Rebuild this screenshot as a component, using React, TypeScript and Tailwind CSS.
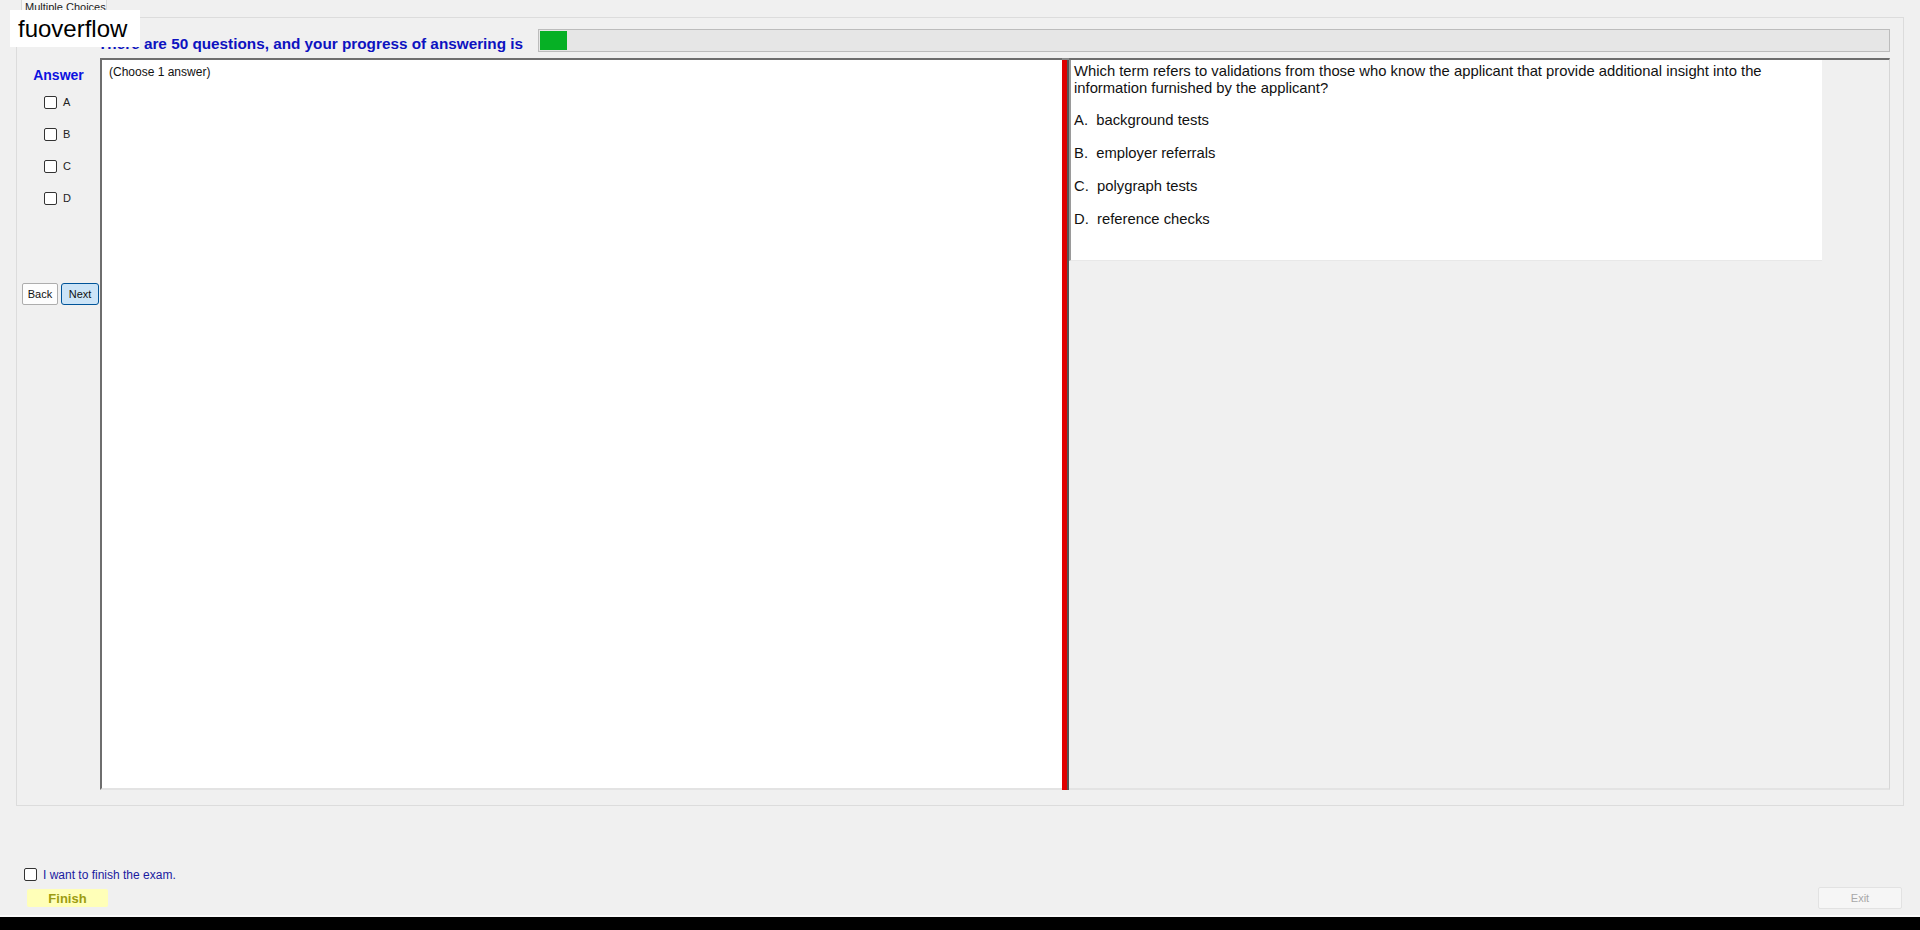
import { useState } from 'react';

const OPTIONS = [
  { key: 'A', text: 'background tests' },
  { key: 'B', text: 'employer referrals' },
  { key: 'C', text: 'polygraph tests' },
  { key: 'D', text: 'reference checks' },
];

const TOTAL = 50;

// Small WinForms-looking checkbox square
const Box = ({ checked, onClick }: { checked: boolean; onClick: () => void }) => (
  <span
    onClick={onClick}
    className="w-[13px] h-[13px] shrink-0 rounded-[2px] border border-[#333333] bg-white flex items-center justify-center cursor-default"
  >
    {checked && (
      <svg width="9" height="9" viewBox="0 0 9 9">
        <path d="M1 4.5 L3.5 7 L8 1.5" stroke="#222" strokeWidth="1.4" fill="none" />
      </svg>
    )}
  </span>
);

const App = () => {
  const [picked, setPicked] = useState<string[]>([]);
  const [finish, setFinish] = useState(false);
  const answered = 1;

  const toggle = (k: string) =>
    setPicked((prev) => (prev.includes(k) ? prev.filter((p) => p !== k) : [k]));

  return (
    <div className="w-full h-[930px] bg-[#f0f0f0] flex flex-col relative overflow-hidden font-['Liberation_Sans',Arial,sans-serif] text-black">
      {/* tab strip */}
      <div className="h-[17px] flex items-end pl-[21px] shrink-0">
        <div className="w-[86px] h-[19px] -mb-[1px] border border-b-0 border-[#d9d9d9] bg-[#f7f7f7] text-[11px] leading-[11px] text-[#222] pl-[3px] pt-[2px] whitespace-nowrap overflow-hidden">
          Multiple Choices
        </div>
      </div>

      {/* tab page */}
      <div className="mx-[16px] h-[789px] shrink-0 border border-[#dcdcdc] flex flex-col pt-[11px] pb-[15px]">
        {/* progress heading */}
        <div className="h-[23px] flex items-center pl-[81px] pr-[13px] shrink-0">
          <span className="text-[15.3px] font-bold text-[#0d12c0] whitespace-nowrap leading-none mt-[7px]">
            There are {TOTAL} questions, and your progress of answering is
          </span>
          <div className="ml-[15px] flex-1 h-[23px] border border-[#bcbcbc] bg-[#e6e6e6] p-[1px]">
            <div className="h-full bg-[#06b025]" style={{ width: `${Math.max(answered / TOTAL * 100, 2)}%` }} />
          </div>
        </div>

        {/* main row */}
        <div className="flex-1 flex mt-[6px] pr-[13px] min-h-0">
          {/* answer sidebar */}
          <div className="w-[83px] shrink-0 flex flex-col">
            <div className="text-[14px] font-bold text-[#0d12e0] text-center pt-[9px] leading-[16px]">Answer</div>
            <div className="flex flex-col gap-[19px] pl-[27px] mt-[13px]">
              {OPTIONS.map((o) => (
                <div key={o.key} className="flex items-center gap-[6px] h-[13px]">
                  <Box checked={picked.includes(o.key)} onClick={() => toggle(o.key)} />
                  <span className="text-[11px] text-[#222]">{o.key}</span>
                </div>
              ))}
            </div>
            <div className="flex gap-[3px] pl-[5px] mt-[78px]">
              <button className="w-[36px] h-[22px] text-[11px] bg-[#fdfdfd] border border-[#adadad] rounded-[2px] text-[#111]">
                Back
              </button>
              <button className="w-[38px] h-[22px] text-[11px] bg-[#cce4f7] border border-[#005499] rounded-[3px] text-[#111]">
                Next
              </button>
            </div>
          </div>

          {/* response area */}
          <div className="w-[962px] shrink-0 bg-white border-l-2 border-t-2 border-[#6e6e6e] border-b-2 border-b-[#e3e3e3] pl-[7px] pt-[5px]">
            <div className="text-[12px] text-[#111] leading-[14px]">(Choose 1 answer)</div>
          </div>

          {/* splitter */}
          <div className="w-[7px] shrink-0 flex border-t-2 border-[#8a8a8a]">
            <div className="w-[5px] bg-[#e00000]" />
            <div className="w-[2px] bg-[#555555]" />
          </div>

          {/* question area */}
          <div className="flex-1 border-t-2 border-[#6e6e6e] border-r border-r-[#d6d6d6] border-b-2 border-b-[#e3e3e3]">
            <div className="w-[753px] h-[201px] bg-white border-l-2 border-[#9a9a9a] border-b border-b-[#e8e8e8] pl-[3px] pt-[3px] text-[14.8px] leading-[17px] text-[#111]">
              <p>
                Which term refers to validations from those who know the applicant that provide additional insight into the
                information furnished by the applicant?
              </p>
              <div className="flex flex-col gap-[16px] mt-[15px]">
                {OPTIONS.map((o) => (
                  <p key={o.key}>
                    {o.key}.&nbsp;&nbsp;{o.text}
                  </p>
                ))}
              </div>
            </div>
          </div>
        </div>
      </div>

      {/* finish controls */}
      <div className="flex-1 flex justify-between items-end pl-[24px] pr-[18px] pb-[6px]">
        <div className="flex flex-col pb-[2px]">
          <label className="flex items-center gap-[6px] h-[13px]">
            <Box checked={finish} onClick={() => setFinish(!finish)} />
            <span className="text-[12px] text-[#1a1aa0] leading-none" onClick={() => setFinish(!finish)}>
              I want to finish the exam.
            </span>
          </label>
          <button className="ml-[3px] mt-[8px] w-[81px] h-[18px] bg-[#ffffb8] rounded-[2px] text-[13px] font-bold text-[#9c9c10] leading-none">
            Finish
          </button>
        </div>
        <button className="w-[84px] h-[22px] bg-[#f6f6f6] border border-[#e2e2e2] rounded-[2px] text-[11px] text-[#a8a8a8]">
          Exit
        </button>
      </div>

      <div className="h-[15px] bg-black shrink-0 border-t-2 border-[#fafafa]" />

      {/* watermark label */}
      <div className="absolute left-[10px] top-[10px] w-[130px] h-[37px] bg-white pl-[8px] text-[24px] leading-[37px] text-black">
        fuoverflow
      </div>
    </div>
  );
};

export default App;
